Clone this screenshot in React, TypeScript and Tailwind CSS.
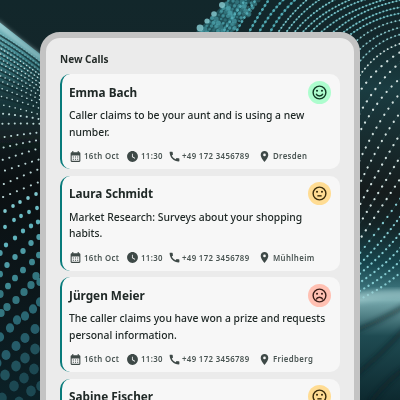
import React from "react";
import { MdCalendarMonth, MdCall, MdPlace, MdWatchLater } from "react-icons/md";

type Mood = "good" | "neutral" | "bad";

const calls: { name: string; lines: string[]; city: string; mood: Mood }[] = [
  { name: "Emma Bach", lines: ["Caller claims to be your aunt and is using a new", "number."], city: "Dresden", mood: "good" },
  { name: "Laura Schmidt", lines: ["Market Research: Surveys about your shopping", "habits."], city: "Mühlheim", mood: "neutral" },
  { name: "Jürgen Meier", lines: ["The caller claims you have won a prize and requests", "personal information."], city: "Friedberg", mood: "bad" },
  { name: "Sabine Fischer", lines: [], city: "", mood: "neutral" },
];

const moodColor: Record<Mood, string> = {
  good: "bg-[#adfdce] text-[#123a25]",
  neutral: "bg-[#ffdc93] text-[#3a2c0c]",
  bad: "bg-[#ffc0b2] text-[#3a1d18]",
};
const mouths: Record<Mood, string> = {
  good: "M7.2 13.9C8.7 17.9 15.3 17.9 16.8 13.9",
  neutral: "M9 15.3H15",
  bad: "M7.3 17.5C8.8 13.5 15.2 13.5 16.7 17.5",
};

function Face({ mood }: { mood: Mood }) {
  return (
    <div className={`flex size-[23px] shrink-0 items-center justify-center rounded-full ${moodColor[mood]}`}>
      <svg viewBox="0 0 24 24" className="size-[17px]" fill="none" stroke="currentColor" strokeWidth="2">
        <circle cx="12" cy="12" r="9" />
        <path d={mouths[mood]} />
        <circle cx="8.5" cy="9.6" r="1.5" fill="currentColor" stroke="none" />
        <circle cx="15.5" cy="9.6" r="1.5" fill="currentColor" stroke="none" />
      </svg>
    </div>
  );
}

// Dotted strands to the right of the panel, as start, control and end points.
const topStrands = [
  [222, 34, 234, 14, 247, -2], [235, 34, 245, 15, 257, -2], [248, 34, 259, 14, 270, -2],
  [258, 34, 269, 14, 285, -2], [269, 34, 281, 12, 297, -2], [277, 34, 291, 13, 309, -2],
  [285, 34, 300, 12, 322, -2], [293, 34, 310, 12, 338, -2], [301, 34, 320, 12, 354, -2],
  [309, 34, 332, 9, 370, -2], [319, 34, 345, 10, 390, -2], [331, 34, 360, 8, 402, 0],
  [341, 34, 370, 12, 402, 7], [351, 34, 375, 17, 402, 13],
];
const sideStrands = [
  [354, 43, 375, 24, 402, 20], [356, 53, 375, 33, 402, 27], [356, 66, 376, 40, 402, 34],
  [356, 81, 375, 51, 402, 43], [356, 97, 376, 66, 402, 51], [356, 120, 376, 82, 402, 61],
  [356, 139, 378, 96, 402, 77], [356, 168, 379, 117, 402, 91], [356, 192, 379, 141, 402, 110],
  [356, 212, 381, 165, 402, 131], [356, 230, 381, 188, 402, 154], [356, 245, 382, 206, 402, 176],
  [356, 258, 384, 223, 402, 196], [356, 268, 384, 240, 402, 214], [356, 277, 384, 254, 402, 231],
  [356, 285, 384, 267, 402, 246], [356, 293, 384, 278, 402, 259], [356, 301, 384, 288, 402, 271],
];

// Fine rows on the left: height at the outer edge and beside the panel.
const fineRows = [
  [32, 64], [37, 69], [42, 74], [47, 78], [52, 82], [57, 86], [62, 90], [68, 94],
  [74, 98], [80, 102], [87, 106], [95, 110], [104, 116], [113, 120], [124, 124],
  [138, 132], [149, 139], [162, 147], [173, 158], [187, 167], [200, 180],
];

// Out-of-focus beads in the lower left, row by row.
const beads = [
  { r: 1.9, fill: "#8cdce2", at: [[5, 211], [13, 206], [20, 202], [28, 198], [36, 194]] },
  { r: 2, fill: "#76ced7", at: [[5, 227], [14, 220], [21, 216], [29, 212], [37, 208]] },
  { r: 2.3, fill: "#69c5cf", at: [[6, 245], [15, 238], [23, 231], [31, 226], [38, 222]] },
  { r: 2.8, fill: "#54aab5", at: [[0, 253], [7, 265], [15, 257], [23, 251], [31, 243], [39, 237]] },
  { r: 3.1, fill: "#43949f", at: [[0, 274], [8, 286], [15, 278], [23, 270], [32, 262], [39, 255]] },
  { r: 3.8, fill: "#397f8a", at: [[0, 294], [1, 313], [7, 307], [16, 300], [24, 292], [31, 285], [36, 276], [40, 282]] },
  { r: 4.3, fill: "#2e6f7b", at: [[0, 337], [10, 328], [17, 320], [25, 316], [33, 309], [40, 302]] },
  { r: 4.7, fill: "#286471", at: [[-3, 363], [6, 355], [16, 346], [25, 338], [35, 329]] },
  { r: 5, fill: "#235662", at: [[-5, 384], [5, 375], [16, 366], [25, 358], [35, 349]] },
  { r: 5, fill: "#1f4c58", at: [[2, 398], [14, 386], [24, 378], [34, 369], [19, 402], [31, 391], [41, 386]] },
];

function Backdrop() {
  return (
    <svg className="absolute inset-0 size-full" viewBox="0 0 400 400" fill="none">
      <defs>
        <linearGradient id="base" x2="0" y2="1">
          <stop offset="0" stopColor="#12272b" /><stop offset=".25" stopColor="#15262a" />
          <stop offset=".45" stopColor="#0b1012" /><stop offset=".75" stopColor="#0c171b" />
          <stop offset="1" stopColor="#0b2127" />
        </linearGradient>
        <linearGradient id="side" x2="0" y2="1">
          <stop offset="0" stopColor="#12272b" /><stop offset=".08" stopColor="#13272b" />
          <stop offset=".22" stopColor="#1a3c41" /><stop offset=".48" stopColor="#151b1c" />
          <stop offset=".56" stopColor="#142426" /><stop offset=".66" stopColor="#17464e" />
          <stop offset=".72" stopColor="#397078" /><stop offset=".75" stopColor="#76a9ad" />
          <stop offset=".78" stopColor="#5b8b90" /><stop offset=".84" stopColor="#1f4b52" />
          <stop offset="1" stopColor="#0d292f" />
        </linearGradient>
        <linearGradient id="wing" x2="0" y2="1">
          <stop offset="0" stopColor="#79bdc3" /><stop offset=".28" stopColor="#3c8088" />
          <stop offset=".55" stopColor="#1b3c41" /><stop offset="1" stopColor="#10191b" />
        </linearGradient>
        <filter id="blur" x="-30%" y="-100%" width="160%" height="300%"><feGaussianBlur stdDeviation="2.5" /></filter>
        <filter id="soft"><feGaussianBlur stdDeviation=".6" /></filter>
      </defs>
      <path fill="url(#base)" d="M0 0H400V400H0Z" />
      <path fill="url(#side)" d="M350 0H400V400H350Z" />
      <path d="M-2 21L44 57V150H-2Z" fill="url(#wing)" filter="url(#soft)" />
      <path d="M-4 22Q18 42 44 60" stroke="#c6e7e9" strokeWidth="4" opacity=".75" filter="url(#blur)" />
      {fineRows.map(([from, to], i) => (
        <g key={i} strokeLinecap="round">
          {i < 12 && <path d={`M-2 ${from + 2}Q22 ${(from + to) / 2} 44 ${to + 2}`} stroke="#122b2f" strokeWidth="1.8" opacity=".75" />}
          <path
            d={`M${-2 - (i % 3)} ${from}Q22 ${(from + to) / 2 - 1} 44 ${to}`}
            stroke={i < 3 ? "#88c5ca" : "#c3dddd"}
            strokeWidth={i < 13 ? 1.5 : 2}
            strokeDasharray={`0.1 ${3 + i * 0.22}`}
            opacity={i < 3 ? 0.6 : 0.95}
          />
        </g>
      ))}
      {beads.map((row, i) => (
        <g key={i} fill={row.fill} filter="url(#soft)">
          {row.at.map(([x, y]) => <ellipse key={`${x}-${y}`} cx={x} cy={y} rx={row.r * 0.96} ry={row.r * 1.08} opacity=".9" />)}
        </g>
      ))}
      <g filter="url(#soft)">
        <path d="M194 34L230 -2H252L230 34Z" fill="#266973" opacity=".6" />
        {Array.from({ length: 95 }, (_, i) => {
          const y = (i * 17) % 35;
          const x = 229 - y * 0.94 + ((i * 29) % 34);
          return <circle key={i} cx={x} cy={y} r={1.3 + (i % 4) * 0.4} fill="#4da4ae" opacity={0.3 + (i % 5) * 0.11} />;
        })}
        <g fill="#83c7cd" opacity=".85">
          <circle cx="222" cy="5" r="3" /><circle cx="214" cy="14" r="2.8" />
          <circle cx="207" cy="21" r="2.6" /><circle cx="200" cy="28" r="3.4" />
        </g>
      </g>
      {topStrands.map(([a, b, c, d, e, f], i) => (
        <g key={i} strokeLinecap="round">
          <path d={`M${a} ${b}Q${c} ${d} ${e} ${f}`} stroke="#2f7f88" strokeWidth="1.2" opacity=".65" />
          <path d={`M${a} ${b}Q${c} ${d} ${e} ${f}`} stroke={i < 5 ? "#52a9b3" : "#7fc2c7"} strokeWidth={i < 5 ? 2.7 : 1.9} strokeDasharray={i < 5 ? "0.1 4.6" : "0.1 3.6"} />
        </g>
      ))}
      {sideStrands.map(([a, b, c, d, e, f], i) => (
        <g key={i} strokeLinecap="round">
          <path d={`M${a} ${b}Q${c} ${d} ${e} ${f}`} stroke="#4b888c" strokeWidth=".7" opacity={i < 4 ? 0.6 : 0.25} />
          <path
            d={`M${a} ${b}Q${c} ${d} ${e} ${f}`}
            stroke={i < 3 ? "#8dc6ca" : i < 12 ? "#d0dfdd" : "#85cbd1"}
            strokeWidth={i < 4 ? 1.8 : 2.2}
            strokeDasharray={i < 4 ? "0.1 4.2" : i < 13 ? "0.1 7.4" : "0.1 5"}
            strokeDashoffset={(i * 3) % 7}
          />
        </g>
      ))}
      <path d="M344 301Q378 292 416 295" stroke="#a8d0d3" strokeWidth="10" opacity=".55" filter="url(#blur)" />
      <g stroke="#0b1d22" strokeWidth="4" opacity=".65" filter="url(#blur)">
        <path d="M355 331Q380 321 405 306M355 376Q380 356 405 328M370 403Q390 377 407 367" />
      </g>
    </svg>
  );
}

function Meta({ city }: { city: string }) {
  return (
    <div className="flex h-[14px] items-center text-[9px] font-semibold tracking-[0.4px] whitespace-nowrap text-[#4a5553]">
      <MdCalendarMonth className="mr-[2px] size-[13px] shrink-0 text-[#3e4947]" />
      <span className="w-[42px] shrink-0 origin-left scale-x-[.87]">16th Oct</span>
      <MdWatchLater className="mr-[2px] size-[13px] shrink-0 text-[#3e4947]" />
      <span className="w-[27px] shrink-0 origin-left scale-x-[.87]">11:30</span>
      <MdCall className="mr-[1px] size-[13px] shrink-0 text-[#3e4947]" />
      <span className="w-[76px] shrink-0 origin-left scale-x-[.87]">+49 172 3456789</span>
      <MdPlace className="mr-[1.5px] size-[13px] shrink-0 text-[#3e4947]" />
      <span className="origin-left scale-x-[.87]">{city}</span>
    </div>
  );
}

export default function App() {
  return (
    <main className="relative h-[400px] w-[400px] overflow-hidden bg-[#11252a] font-['Noto_Sans',sans-serif]">
      <Backdrop />
      <section className="relative mx-auto mt-8 h-[420px] w-80 rounded-[20px] border-[6px] border-[#c3c3c3] bg-[#ebebeb] px-[14px] pt-[13px]">
        <h1 className="h-[23px] origin-left scale-x-[.91] text-[11px] leading-4 font-bold text-[#242b29]">New Calls</h1>
        <div className="flex flex-col gap-[6.5px]">
          {calls.map((call) => (
            <article key={call.name} className="h-[95px] shrink-0 rounded-[10px] border-l-2 border-[#087b7b] bg-[#f7f7f7] pl-[7px] text-[#202927]">
              <div className="flex h-[33px] items-start justify-between pt-[6.5px] pr-[9.5px]">
                <h2 className="origin-left scale-x-[.905] text-[13px] leading-[22px] font-bold">{call.name}</h2>
                <Face mood={call.mood} />
              </div>
              {call.lines.length > 0 && (
                <>
                  <div className="h-[42px] origin-left scale-x-[.9] text-[11.5px] leading-[16.5px] font-medium whitespace-nowrap">
                    {call.lines.map((line) => <p key={line}>{line}</p>)}
                  </div>
                  <Meta city={call.city} />
                </>
              )}
            </article>
          ))}
        </div>
      </section>
    </main>
  );
}
